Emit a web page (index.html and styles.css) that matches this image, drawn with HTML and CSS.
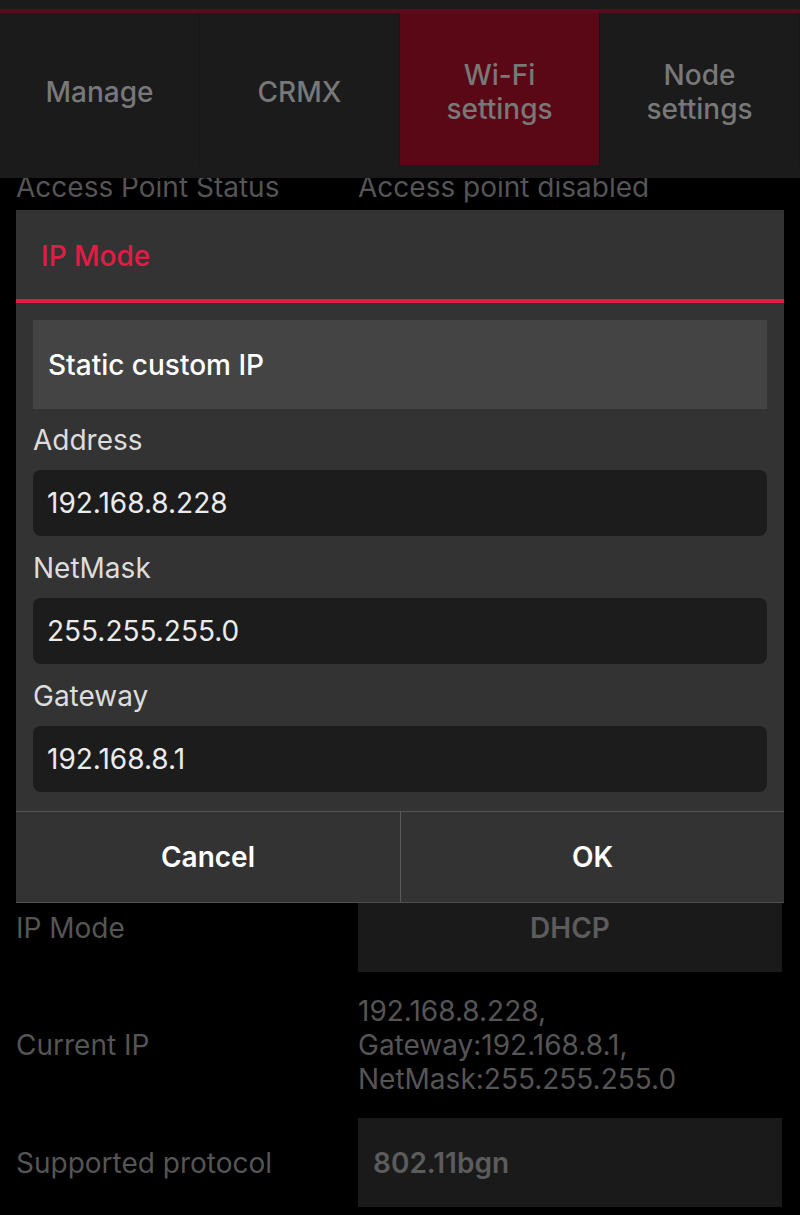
FILE: index.html
```html
<!DOCTYPE html>
<html lang="en">

<head>
    <meta charset="UTF-8">
    <meta name="viewport" content="width=device-width, initial-scale=1.0">
    <title>Wi-Fi settings</title>
    <link rel="stylesheet" href="styles.css">
</head>

<body>
    <header class="top-bar">
        <nav class="tabs">
            <div class="tab">Manage</div>
            <div class="tab">CRMX</div>
            <div class="tab active">Wi-Fi<br>settings</div>
            <div class="tab">Node<br>settings</div>
        </nav>
    </header>

    <main class="settings">
        <div class="row">
            <div class="row-label">Access Point Status</div>
            <div class="row-value">Access point disabled</div>
        </div>

        <!-- rows under the open dialog -->
        <div class="covered"></div>

        <div class="row">
            <div class="row-label">IP Mode</div>
            <div class="row-value boxed center">DHCP</div>
        </div>
        <div class="row">
            <div class="row-label">Current IP</div>
            <div class="row-value">192.168.8.228,<br>Gateway:192.168.8.1,<br>NetMask:255.255.255.0</div>
        </div>
        <div class="row">
            <div class="row-label">Supported protocol</div>
            <div class="row-value boxed">802.11bgn</div>
        </div>
    </main>

    <div class="dialog">
        <div class="dialog-title">IP Mode</div>
        <div class="dialog-body">
            <div class="select">Static custom IP</div>

            <label for="address">Address</label>
            <input type="text" id="address" value="192.168.8.228">

            <label for="netmask">NetMask</label>
            <input type="text" id="netmask" value="255.255.255.0">

            <label for="gateway">Gateway</label>
            <input type="text" id="gateway" value="192.168.8.1">
        </div>
        <div class="dialog-buttons">
            <button>Cancel</button>
            <button>OK</button>
        </div>
    </div>
</body>

</html>
```

FILE: styles.css
```css
* {
    margin: 0;
    padding: 0;
    box-sizing: border-box;
}

body {
    font-family: Inter, "Noto Sans", sans-serif;
    background: #000;
    color: #555;
    font-size: 28px;
    line-height: 34px;
}

/* fixed tab header, content scrolls under it */
.top-bar {
    position: fixed;
    top: 0;
    left: 0;
    right: 0;
    height: 178px;
    background: #1b1b1b;
    padding-top: 9px;
    z-index: 1;
}

.tabs {
    display: grid;
    grid-template-columns: repeat(4, 1fr);
    height: 156px;
    border-top: 4px solid #5c0b1e;
}

.tab {
    display: flex;
    align-items: center;
    justify-content: center;
    text-align: center;
    padding-top: 6px;
    color: #787878;
    font-weight: 500;
    border-right: 1px solid #161616;
}

.tab.active {
    background: #5a0815;
}

.settings {
    padding: 170px 18px 0 16px;
    display: flex;
    flex-direction: column;
    gap: 22px;
}

.covered {
    height: 635px;
}

.row {
    display: grid;
    grid-template-columns: 342px 1fr;
    align-items: center;
}

.row-value.boxed {
    background: #1a1a1a;
    height: 89px;
    display: flex;
    align-items: center;
    padding-left: 15px;
    font-weight: 600;
    color: #5c5c5c;
}

.row-value.center {
    justify-content: center;
    padding-left: 0;
}

/* modal */
.dialog {
    position: fixed;
    top: 210px;
    left: 16px;
    width: 768px;
    background: #333;
    z-index: 2;
    border-bottom: 1px solid #4f4f4f;
}

.dialog-title {
    height: 93px;
    padding: 29px 25px 0;
    color: #e31b45;
    font-weight: 500;
    border-bottom: 4px solid #e01c44;
}

.dialog-body {
    padding: 17px 17px 19px;
}

.select {
    background: #444;
    height: 89px;
    display: flex;
    align-items: center;
    padding-left: 15px;
    color: #fff;
    font-weight: 500;
}

label {
    display: block;
    padding: 14px 0 13px;
    color: #ddd;
}

input {
    display: block;
    width: 100%;
    height: 66px;
    padding: 0 14px;
    border: none;
    border-radius: 8px;
    background: #1c1c1c;
    color: #ebebeb;
    font: inherit;
    outline: none;
}

label + input + label {
    padding-top: 15px;
}

.dialog-buttons {
    display: grid;
    grid-template-columns: 1fr 1fr;
    border-top: 1px solid #555;
}

.dialog-buttons button {
    height: 90px;
    background: #333;
    border: none;
    color: #fff;
    font: inherit;
    font-weight: 600;
}

.dialog-buttons button + button {
    border-left: 1px solid #5a5a5a;
}
```
